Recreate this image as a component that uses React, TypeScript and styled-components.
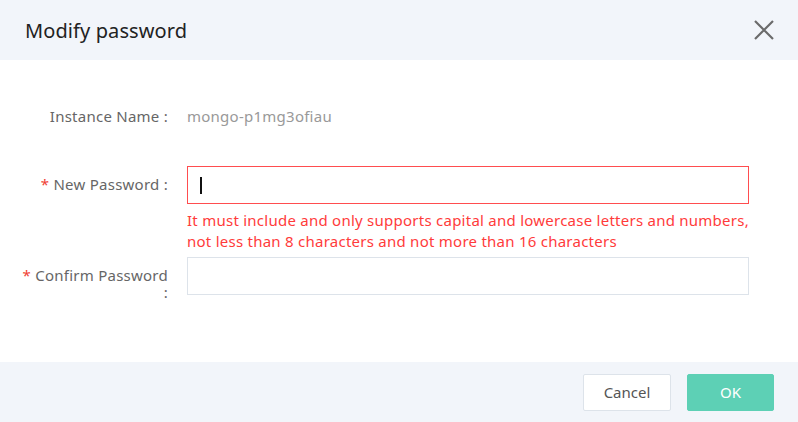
import React from 'react'
import styled, { createGlobalStyle } from 'styled-components'

const GlobalStyle = createGlobalStyle`
	html, body {
		margin: 0;
		padding: 0;
		background: #ffffff;
	}
	* {
		box-sizing: border-box;
	}
`

const App: React.FC = () => {
	return (
		<>
			<GlobalStyle />
			<Dialog>
				<Header>
					<Title>Modify password</Title>
					<Close aria-label="close">
						<svg width="20" height="20" viewBox="0 0 20 20">
							<path d="M1 1L19 19M19 1L1 19" stroke="#6b6b6b" strokeWidth="2.2" fill="none" />
						</svg>
					</Close>
				</Header>
				<Body>
					<Row>
						<Label>Instance Name :</Label>
						<Value>mongo-p1mg3ofiau</Value>
					</Row>
					<FieldRow>
						<Label required>New Password :</Label>
						<Field>
							<Input error>
								<Caret />
							</Input>
							<ErrorText>
								It must include and only supports capital and lowercase letters and numbers,
								<br />
								not less than 8 characters and not more than 16 characters
							</ErrorText>
						</Field>
					</FieldRow>
					<FieldRow>
						<Label required wrap>Confirm Password :</Label>
						<Field>
							<Input />
						</Field>
					</FieldRow>
				</Body>
				<Footer>
					<Button>Cancel</Button>
					<Button primary>OK</Button>
				</Footer>
			</Dialog>
		</>
	)
}

export default App

const Dialog = styled.div`
	width: 798px;
	height: 422px;
	display: flex;
	flex-direction: column;
	font-family: 'Noto Sans', 'Open Sans', sans-serif;
	background: #ffffff;
`

const Header = styled.div`
	height: 60px;
	background: #f2f5fa;
	display: flex;
	align-items: center;
	justify-content: space-between;
	padding: 0 24px 0 25px;
`

const Title = styled.h2`
	margin: 0;
	font-size: 20px;
	font-weight: 400;
	color: #222222;
	letter-spacing: 0.1px;
`

const Close = styled.div`
	width: 20px;
	height: 20px;
	display: flex;
`

const Body = styled.div`
	flex: 1;
	padding-top: 44px;
	display: flex;
	flex-direction: column;
	font-size: 15px;
	letter-spacing: 0.25px;
`

const Row = styled.div`
	display: flex;
	align-items: center;
	height: 24px;
	margin-bottom: 38px;
`

const FieldRow = styled.div`
	display: flex;
	align-items: flex-start;
	margin-bottom: 5px;
`

const Label = styled.div<{ required?: boolean; wrap?: boolean }>`
	width: 187px;
	padding-right: 19px;
	flex-shrink: 0;
	text-align: right;
	line-height: 17px;
	color: #666666;
	padding-top: ${({ required }) => (required ? '10px' : '0')};
	padding-left: ${({ wrap }) => (wrap ? '19px' : '0')};
	&::before {
		content: ${({ required }) => (required ? "'* '" : "''")};
		color: #f04134;
	}
`

const Value = styled.div`
	color: #999999;
`

const Field = styled.div`
	width: 562px;
	display: flex;
	flex-direction: column;
`

const Input = styled.div<{ error?: boolean }>`
	height: 38px;
	border: 1px solid ${({ error }) => (error ? '#ff4d4f' : '#dde3ea')};
	background: #ffffff;
	display: flex;
	align-items: center;
	padding-left: 12px;
`

const Caret = styled.span`
	width: 2px;
	height: 17px;
	background: #111111;
`

const ErrorText = styled.div`
	margin-top: 6px;
	line-height: 21px;
	color: #ff3b3b;
	white-space: nowrap;
`

const Footer = styled.div`
	height: 60px;
	background: #f2f5fa;
	display: flex;
	align-items: center;
	justify-content: flex-end;
	gap: 16px;
	padding: 0 24px;
`

const Button = styled.div<{ primary?: boolean }>`
	width: ${({ primary }) => (primary ? '87px' : '88px')};
	height: 37px;
	border-radius: 2px;
	display: flex;
	align-items: center;
	justify-content: center;
	font-size: 15px;
	background: ${({ primary }) => (primary ? '#5dd0b5' : '#ffffff')};
	color: ${({ primary }) => (primary ? '#ffffff' : '#555555')};
	border: 1px solid ${({ primary }) => (primary ? '#5dd0b5' : '#dde3ea')};
`
